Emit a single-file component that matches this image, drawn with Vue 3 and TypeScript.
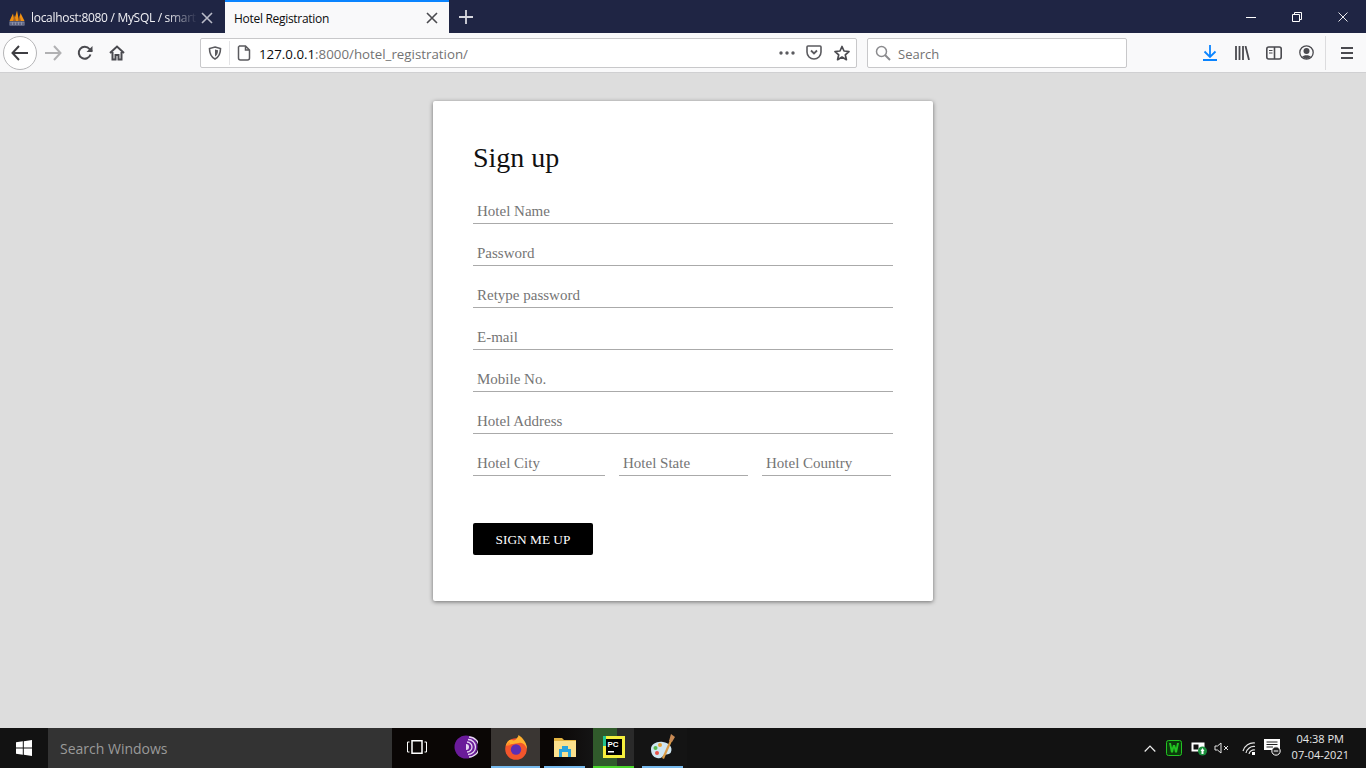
<script setup lang="ts">
const fields = ['Hotel Name', 'Password', 'Retype password', 'E-mail', 'Mobile No.', 'Hotel Address']
const places = [
  { name: 'Hotel City', cls: 'city' },
  { name: 'Hotel State', cls: 'state' },
  { name: 'Hotel Country', cls: 'country' },
]
</script>

<template>
  <div class="screen">
    <div class="tabbar">
      <div class="tab tab-off">
        <svg class="favicon" width="16" height="16" viewBox="0 0 16 16">
          <path d="M.5 11 L4 3.500 L5.500 11Z M5 11 L8 .5 L10 11Z M10 11 L11.500 3 L15.500 11Z" fill="#f29111" />
          <path d="M4 11 L5.500 5 L7 11Z M9 11 L10.500 5 L12 11Z" fill="#a8641f" />
          <rect x=".5" y="11.500" width="15" height="4" fill="#8a8fa8" />
          <path d="M2 12.500 V15 M5 12.500 V15 M8 12.500 V15 M11 12.500 V15 M14 12.500 V15" stroke="#3b4060" />
        </svg>
        <span class="tab-title fade">localhost:8080 / MySQL / smart</span>
        <svg class="tab-x" width="12" height="12" viewBox="0 0 12 12"><path d="M1 1 L11 11 M11 1 L1 11" stroke="#b9bbc8" stroke-width="1.600" /></svg>
      </div>
      <div class="tab tab-on">
        <span class="tab-title">Hotel Registration</span>
        <svg class="tab-x" width="12" height="12" viewBox="0 0 12 12"><path d="M1 1 L11 11 M11 1 L1 11" stroke="#4a4a4f" stroke-width="1.600" /></svg>
      </div>
      <svg class="newtab" width="14" height="14" viewBox="0 0 14 14"><path d="M7 0 V14 M0 7 H14" stroke="#d6d7de" stroke-width="1.800" /></svg>
      <div class="win-btns">
        <svg width="10" height="10" viewBox="0 0 10 10"><path d="M0 5.500 H10" stroke="#fff" /></svg>
        <svg width="10" height="10" viewBox="0 0 10 10"><path d="M.5 2.500 H7.500 V9.500 H.5Z M2.500 2.500 V.5 H9.500 V7.500 H7.500" fill="none" stroke="#fff" /></svg>
        <svg width="10" height="10" viewBox="0 0 10 10"><path d="M.5 .5 L9.500 9.500 M9.500 .5 L.5 9.500" stroke="#fff" stroke-width=".9" /></svg>
      </div>
    </div>

    <div class="toolbar">
      <div class="back">
        <svg width="18" height="16" viewBox="0 0 18 16"><path d="M8 1 L1.500 8 L8 15 M1.500 8 H17" fill="none" stroke="#3e3e42" stroke-width="2" /></svg>
      </div>
      <svg class="fwd" width="18" height="16" viewBox="0 0 18 16"><path d="M10 1 L16.500 8 L10 15 M16.500 8 H1" fill="none" stroke="#b1b1b3" stroke-width="2" /></svg>
      <svg class="reload" width="16" height="16" viewBox="0 0 16 16"><path d="M13.500 9.500 A6 6 0 1 1 12.500 4 L15 6.500" fill="none" stroke="#4a4a4f" stroke-width="2" /><path d="M15.500 1 V7 H9.500Z" fill="#4a4a4f" /></svg>
      <svg class="home" width="16" height="16" viewBox="0 0 16 16"><path d="M1 8 L8 1.500 L15 8 M3.500 7 V14.500 H6.500 V10 H9.500 V14.500 H12.500 V7" fill="none" stroke="#4a4a4f" stroke-width="2" /></svg>

      <div class="urlbar">
        <svg class="shield" width="14" height="14" viewBox="0 0 14 14"><path d="M7 1 L12.500 2.500 C12.500 8 11 11 7 13 C3 11 1.500 8 1.500 2.500Z" fill="none" stroke="#5b5b5f" stroke-width="1.600" /><path d="M7 3.500 L10 4.300 C10 7.500 9 9.500 7 10.500Z" fill="#5b5b5f" /></svg>
        <span class="url-sep"></span>
        <svg class="page" width="14" height="16" viewBox="0 0 14 16"><path d="M2.500 1 H8.500 L12.500 5 V13 A2 2 0 0 1 10.500 15 H3.500 A2 2 0 0 1 1.500 13 V2Z M8.500 1 V5 H12.500" fill="none" stroke="#5b5b5f" stroke-width="1.500" /></svg>
        <span class="url"><span class="url-host">127.0.0.1</span>:8000/hotel_registration/</span>
        <svg class="dots" width="16" height="4" viewBox="0 0 16 4"><circle cx="2" cy="2" r="1.700" fill="#5b5b5f" /><circle cx="8" cy="2" r="1.700" fill="#5b5b5f" /><circle cx="14" cy="2" r="1.700" fill="#5b5b5f" /></svg>
        <svg class="pocket" width="16" height="15" viewBox="0 0 16 15"><path d="M2 1 H14 A1 1 0 0 1 15 2 V7 A7 7 0 0 1 1 7 V2 A1 1 0 0 1 2 1Z" fill="none" stroke="#5b5b5f" stroke-width="1.600" /><path d="M5 5.500 L8 8.500 L11 5.500" fill="none" stroke="#5b5b5f" stroke-width="1.800" /></svg>
        <svg class="star" width="16" height="16" viewBox="0 0 16 16"><path d="M8 1.500 L10 6 L15 6.500 L11.300 9.800 L12.400 14.700 L8 12.100 L3.600 14.700 L4.700 9.800 L1 6.500 L6 6Z" fill="none" stroke="#4a4a4f" stroke-width="1.700" stroke-linejoin="round" /></svg>
      </div>

      <div class="searchbar">
        <svg width="16" height="16" viewBox="0 0 16 16"><circle cx="6.500" cy="6.500" r="5" fill="none" stroke="#8b8b8e" stroke-width="1.500" /><path d="M10 10 L15 15" stroke="#8b8b8e" stroke-width="2" /></svg>
        <span>Search</span>
      </div>

      <svg class="dl" width="14" height="16" viewBox="0 0 14 16"><path d="M7 0 V12 M1.500 6.500 L7 12 L12.500 6.500 M0 15 H14" fill="none" stroke="#0a84ff" stroke-width="1.800" /></svg>
      <svg class="lib" width="15" height="14" viewBox="0 0 15 14"><path d="M1 0 V14 M4.500 0 V14 M8 0 V14 M10.500 0 L14 14" stroke="#4a4a4f" stroke-width="1.800" /></svg>
      <svg class="side" width="16" height="14" viewBox="0 0 16 14"><rect x=".8" y="1" width="14.400" height="12" rx="2" fill="none" stroke="#4a4a4f" stroke-width="1.600" /><path d="M8.500 1 V13" stroke="#4a4a4f" stroke-width="1.600" /><path d="M3 4.500 H6.500 M3 7 H6.500" stroke="#4a4a4f" stroke-width="1.200" /></svg>
      <svg class="acct" width="15" height="15" viewBox="0 0 15 15"><circle cx="7.500" cy="7.500" r="6.700" fill="none" stroke="#4a4a4f" stroke-width="1.300" /><circle cx="7.500" cy="6" r="3" fill="#4a4a4f" /><path d="M3 12 C4.500 9.500 10.500 9.500 12 12 L7.500 14Z" fill="#4a4a4f" /></svg>
      <span class="tool-sep"></span>
      <svg class="menu" width="12" height="12" viewBox="0 0 12 12"><path d="M0 1 H12 M0 6 H12 M0 11 H12" stroke="#4a4a4f" stroke-width="1.800" /></svg>
    </div>

    <main class="page-body">
      <form class="card" @submit.prevent>
        <h2>Sign up</h2>
        <input v-for="f in fields" :key="f" class="line" type="text" :placeholder="f" />
        <div class="places">
          <input v-for="p in places" :key="p.name" class="line" :class="p.cls" type="text" :placeholder="p.name" />
        </div>
        <button class="submit" type="submit">SIGN ME UP</button>
      </form>
    </main>

    <div class="taskbar">
      <div class="start">
        <svg width="16" height="16" viewBox="0 0 16 16"><path d="M0 2.300 L6.800 1.300 V7.500 H0Z M7.800 1.200 L16 0 V7.500 H7.800Z M0 8.500 H6.800 V14.700 L0 13.700Z M7.800 8.500 H16 V16 L7.800 14.800Z" fill="#fff" /></svg>
      </div>
      <div class="task-search">Search Windows</div>
      <div class="task-icons">
        <div class="ti">
          <svg width="20" height="14" viewBox="0 0 20 14"><rect x="5" y=".75" width="10" height="12.500" fill="none" stroke="#fff" stroke-width="1.500" /><path d="M2.500 2 H.5 V12 H2.500 M17.500 2 H19.500 V12 H17.500" fill="none" stroke="#fff" /></svg>
        </div>
        <div class="ti">
          <svg width="24" height="24" viewBox="0 0 24 24"><circle cx="12" cy="12" r="11.500" fill="#6a1b9a" /><path d="M13 7 A5 5 0 0 1 13 17 M14 4.500 A7.500 7.500 0 0 1 14 19.500 M15 2 A10 10 0 0 1 15 22" fill="none" stroke="#e6d5f2" stroke-width="1.300" /><path d="M12 9 A3 3 0 0 1 12 15Z" fill="#e6d5f2" /></svg>
        </div>
        <div class="ti ti-active on-blue">
          <svg width="24" height="25" viewBox="0 0 24 25"><circle cx="12" cy="14" r="10.800" fill="#f2552c" /><path d="M2 10 C3 6 6 4 8 5 C10 6 12 5 13 3 C14 2 14.500 1 14.500 0 C19 3 23 8 23 14 C21 9 18 7 15 8Z" fill="#ffb02e" /><path d="M1.500 11 L5 7 L7 10Z" fill="#ff8a2a" /><circle cx="12" cy="14.500" r="5.200" fill="#5b2fb5" /></svg>
        </div>
        <div class="ti on-blue">
          <svg width="22" height="20" viewBox="0 0 22 20"><path d="M0 1 H8 L10 3 H22 V20 H0Z" fill="#e3b341" /><rect x="0" y="4" width="22" height="16" fill="#fbe08c" /><path d="M5 20 V12 H8 V9 H14 V12 H17 V20 H14 V15 H8 V20Z" fill="#2aa4dc" /></svg>
        </div>
        <div class="ti ti-green">
          <svg width="22" height="22" viewBox="0 0 22 22"><rect width="22" height="22" fill="#f5ee3d" /><rect x="0" y="0" width="3" height="10" fill="#22c38e" /><rect x="3" y="3" width="16" height="16" fill="#000" /><text x="4.500" y="11" class="pc">PC</text><rect x="5" y="15" width="6" height="1.500" fill="#fff" /></svg>
        </div>
        <div class="ti on-blue">
          <svg width="24" height="26" viewBox="0 0 24 26"><path d="M0 15 C0 10 6 7 12 8 C18 9 22 13 20 18 C19 21 15 20 13 21 C11 23 10 25 6 24 C2 23 0 20 0 15Z" fill="#cfe6f2" /><circle cx="4.500" cy="14" r="2" fill="#58b94c" /><circle cx="9" cy="11" r="2" fill="#e8a33a" /><circle cx="6" cy="19" r="2" fill="#e8524a" /><path d="M11 24 L19 6 L21 7 L13 25Z" fill="#d99a45" /><path d="M18 7 L20 0 L24 3 L21 8Z" fill="#c88a55" /></svg>
        </div>
      </div>
      <div class="tray">
        <svg class="chev" width="12" height="7" viewBox="0 0 12 7"><path d="M.7 6.500 L6 1 L11.300 6.500" fill="none" stroke="#eee" stroke-width="1.200" /></svg>
        <svg class="t-wamp" width="16" height="16" viewBox="0 0 16 16"><rect x=".5" y=".5" width="15" height="15" rx="2" fill="#0c3a0c" stroke="#22c322" /><path d="M3 3 L5 12.500 H7 L8 8 L9 12.500 H11 L13 3 H11 L10 8 L9 5 H7 L6 8 L5 3Z" fill="#22c322" /></svg>
        <svg class="t-batt" width="16" height="16" viewBox="0 0 16 16"><rect x=".5" y="2.500" width="13" height="9" fill="#fff" /><rect x="2.500" y="4.500" width="5" height="5" fill="#111" /><circle cx="11.500" cy="11" r="4.500" fill="#1a8f3c" /><path d="M11.500 8 L13.500 11 H9.500Z M10.500 11 H12.500 V14 H10.500Z" fill="#fff" /></svg>
        <svg class="t-vol" width="16" height="12" viewBox="0 0 16 12"><path d="M1 4 H3.500 L7 1 V11 L3.500 8 H1Z" fill="none" stroke="#e4e4e4" /><path d="M10 4 L14 8 M14 4 L10 8" stroke="#e4e4e4" /></svg>
        <svg class="t-wifi" width="14" height="14" viewBox="0 0 14 14"><path d="M1 10 A11 11 0 0 1 13 2 M4 12 A8 8 0 0 1 13 5.500 M7 13 A5 5 0 0 1 13 9" fill="none" stroke="#e4e4e4" stroke-width="1.200" /><rect x="10" y="11" width="3" height="3" fill="#fff" /></svg>
        <svg class="t-note" width="18" height="18" viewBox="0 0 18 18"><path d="M0 1 H16 V12 H11 L8 15 V12 H0Z" fill="#fff" /><path d="M2.500 4 H13.500 M2.500 6.500 H13.500 M2.500 9 H9" stroke="#222" /><circle cx="12" cy="13" r="4.200" fill="#222" stroke="#fff" /><path d="M9.800 13 H14.200" stroke="#fff" /></svg>
        <div class="clock"><span>04:38 PM</span><span>07-04-2021</span></div>
      </div>
    </div>
  </div>
</template>

<style scoped>
.screen {
  width: 1366px;
  height: 768px;
  display: flex;
  flex-direction: column;
  overflow: hidden;
  font-family: "Open Sans", "Noto Sans", sans-serif;
}

/* tabs */
.tabbar {
  height: 33px;
  flex: none;
  background: #1f2544;
  display: flex;
  align-items: stretch;
}
.tab {
  box-sizing: border-box;
  display: flex;
  align-items: center;
  font-size: 12px;
  letter-spacing: -0.3px;
}
.tab-off {
  width: 225px;
  padding: 2px 12px 0 9px;
  color: #f0f0f4;
}
.tab-on {
  width: 224px;
  padding: 1px 11px 0 9px;
  background: #f9f9fa;
  border-top: 2px solid #0a84ff;
  color: #0c0c0d;
}
.favicon {
  margin-right: 6px;
  flex: none;
}
.tab-title {
  flex: 1;
  min-width: 0;
  white-space: nowrap;
  overflow: hidden;
}
.fade {
  -webkit-mask-image: linear-gradient(to right, #000 80%, transparent 98%);
  mask-image: linear-gradient(to right, #000 80%, transparent 98%);
}
.newtab {
  align-self: center;
  margin-left: 10px;
}
.win-btns {
  margin-left: auto;
  width: 138px;
  display: flex;
  align-items: center;
  justify-content: space-around;
}

/* toolbar */
.toolbar {
  height: 40px;
  flex: none;
  box-sizing: border-box;
  background: #f9f9fa;
  border-bottom: 1px solid #d0d0d2;
  display: flex;
  align-items: center;
}
.back {
  width: 32px;
  height: 32px;
  margin-left: 3px;
  border: 1px solid #b5b5b7;
  border-radius: 50%;
  background: #fff;
  display: flex;
  align-items: center;
  justify-content: center;
}
.fwd { margin-left: 7px; }
.reload { margin-left: 15px; }
.home { margin-left: 16px; }
.urlbar {
  width: 657px;
  height: 30px;
  box-sizing: border-box;
  margin-left: 75px;
  background: #fff;
  border: 1px solid #c8c8ca;
  border-radius: 2px;
  display: flex;
  align-items: center;
}
.shield { margin-left: 7px; }
.url-sep {
  width: 1px;
  height: 24px;
  margin-left: 7px;
  background: #e4e4e6;
}
.page { margin-left: 7px; }
.url {
  margin-left: 8px;
  padding-top: 2px;
  font-size: 13.3px;
  color: #737373;
  flex: 1;
}
.url-host { color: #0c0c0d; }
.dots { margin-right: 11px; }
.pocket { margin-right: 12px; }
.star { margin-right: 6px; }
.searchbar {
  width: 260px;
  height: 30px;
  box-sizing: border-box;
  margin-left: 10px;
  padding-left: 7px;
  background: #fff;
  border: 1px solid #c8c8ca;
  border-radius: 2px;
  display: flex;
  align-items: center;
  gap: 7px;
  font-size: 13px;
  color: #737373;
}
.searchbar span { padding-top: 2px; }
.dl { margin-left: 76px; }
.lib { margin-left: 18px; }
.side { margin-left: 16px; }
.acct { margin-left: 17px; }
.tool-sep {
  width: 1px;
  height: 34px;
  margin-left: 11px;
  background: #dcdcde;
}
.menu { margin-left: 15px; }

/* page */
.page-body {
  flex: 1;
  background: #ddd;
  padding-top: 28px;
  display: flex;
  justify-content: center;
  align-items: flex-start;
}
.card {
  width: 500px;
  height: 500px;
  box-sizing: border-box;
  padding: 40px;
  background: #fff;
  border-radius: 2px;
  box-shadow: 0 1px 4px rgba(0, 0, 0, 0.5);
  font-family: "Liberation Serif", serif;
  display: flex;
  flex-direction: column;
}
h2 {
  margin: 0 0 26px;
  height: 33px;
  font-size: 28px;
  line-height: 33px;
  font-weight: 400;
  color: #111;
}
.line {
  display: block;
  width: 420px;
  height: 24px;
  box-sizing: border-box;
  margin-bottom: 18px;
  padding: 0 4px;
  border: 0;
  border-bottom: 1px solid #aaa;
  background: none;
  outline: 0;
  font-family: inherit;
  font-size: 15px;
}
.line::placeholder {
  color: #757575;
  opacity: 1;
}
.places {
  display: flex;
}
.places .line {
  margin-bottom: 0;
}
.city { width: 132px; margin-right: 14px; }
.state { width: 129px; margin-right: 14px; }
.country { width: 129px; }
.submit {
  width: 120px;
  height: 32px;
  margin-top: 47px;
  padding: 1px 0 0;
  border: 0;
  border-radius: 2px;
  background: #000;
  color: #fff;
  font-family: inherit;
  font-size: 13.33px;
}

/* taskbar */
.taskbar {
  height: 40px;
  flex: none;
  background: #121212;
  display: flex;
  align-items: stretch;
}
.start {
  width: 48px;
  display: flex;
  align-items: center;
  justify-content: center;
}
.task-search {
  width: 344px;
  box-sizing: border-box;
  padding-left: 12px;
  background: #333;
  color: #9a9a9a;
  font-size: 14px;
  display: flex;
  align-items: center;
}
.task-icons {
  display: flex;
  background: linear-gradient(to right, #0a0605 160px, #141414 200px);
}
.ti {
  width: 41px;
  margin: 0 4px;
  box-sizing: border-box;
  display: flex;
  align-items: center;
  justify-content: center;
  border-bottom: 2px solid transparent;
}
.on-blue { border-bottom-color: #76b9ed; }
.ti-active {
  width: 49px;
  margin: 0 0 0 1px;
  background: #3a3633;
}
.ti-green {
  background: linear-gradient(to right, #305a2b 24px, #2a2a2a 24px);
  border-bottom-color: #4ad62c;
}
.pc {
  font-family: "Liberation Sans", sans-serif;
  font-size: 8px;
  font-weight: 700;
  fill: #fff;
}
.tray {
  margin-left: auto;
  width: 224px;
  display: flex;
  align-items: center;
}
.chev { margin-left: 2px; }
.t-wamp { margin-left: 10px; }
.t-batt { margin-left: 9px; }
.t-vol { margin-left: 7px; }
.t-wifi { margin-left: 12px; }
.t-note { margin-left: 8px; margin-top: -2px; }
.clock {
  margin-left: auto;
  margin-right: 17px;
  display: flex;
  flex-direction: column;
  align-items: center;
  color: #e8e8e8;
  font-size: 11px;
  line-height: 16px;
  padding-bottom: 2px;
}
</style>

<style>
body {
  margin: 0;
}
</style>
